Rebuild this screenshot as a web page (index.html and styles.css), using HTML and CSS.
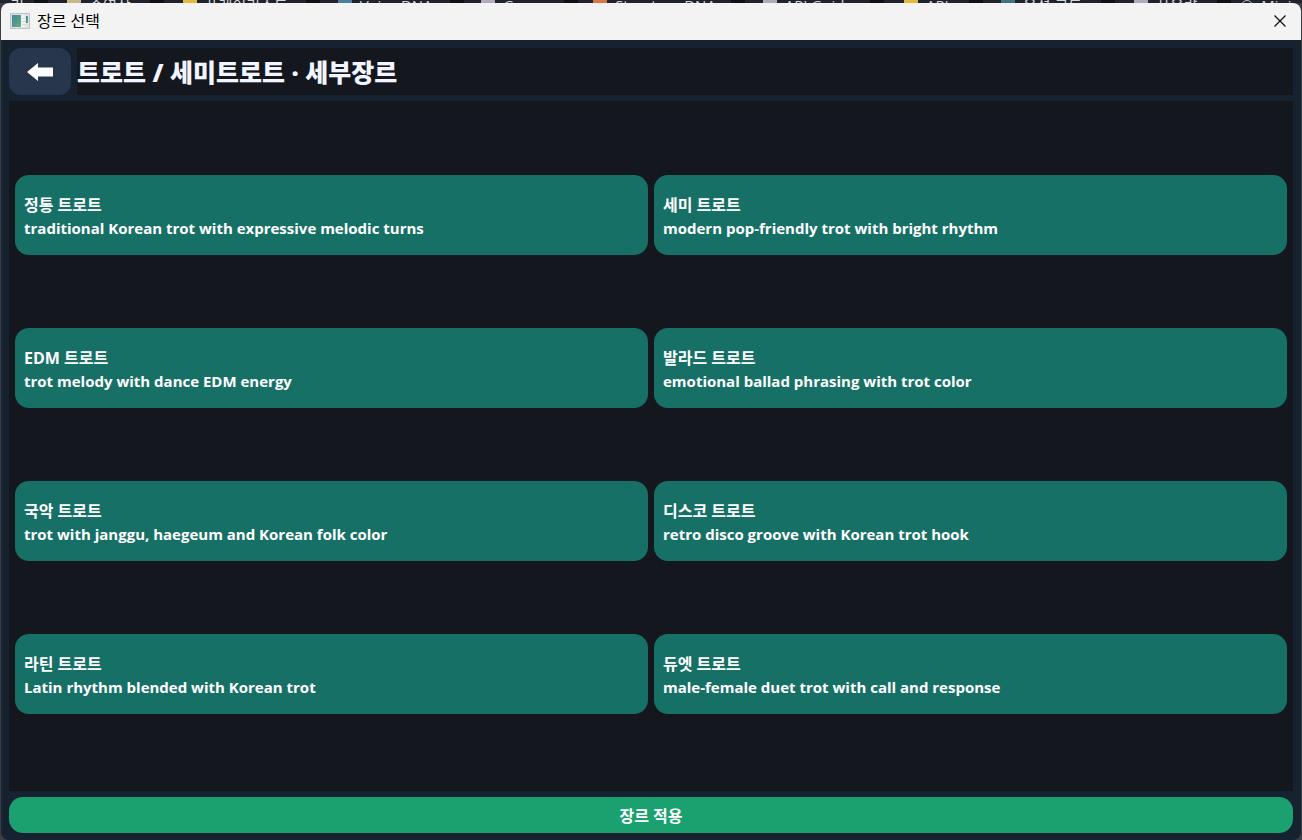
FILE: index.html
```
<!DOCTYPE html>
<html lang="ko">
<head>
<meta charset="UTF-8">
<meta name="viewport" content="width=device-width, initial-scale=1.0">
<title>장르 선택</title>
<link rel="stylesheet" href="styles.css">
</head>
<body>

<!-- Tabs of the main window, peeking out above the dialog -->
<div class="back-tabs">
    <span class="back-tab first">기</span>
    <span class="back-tab"><i class="dot sand"></i>숏영상</span>
    <span class="back-tab wide"><i class="dot yellow"></i>플레이리스트</span>
    <span class="back-tab voice"><i class="dot blue"></i>Voice DNA</span>
    <span class="back-tab genre"><i class="dot lilac"></i>Genre</span>
    <span class="back-tab structure"><i class="dot orange"></i>Structure DNA</span>
    <span class="back-tab guide"><i class="dot lilac"></i>API Guide</span>
    <span class="back-tab api"><i class="dot yellow"></i>API</span>
    <span class="back-tab code"><i class="dot teal"></i>음성 코드</span>
    <span class="back-tab"><i class="dot lilac"></i>사용량</span>
    <span class="back-tab last"><i class="ring"></i>Mini</span>
</div>

<div class="window">
    <div class="titlebar">
        <svg class="app-icon" width="20" height="16" viewBox="0 0 20 16" aria-hidden="true">
            <defs>
                <linearGradient id="pane" x1="0" y1="0" x2="1" y2="1">
                    <stop offset="0" stop-color="#4583a0"/>
                    <stop offset="1" stop-color="#5fb07c"/>
                </linearGradient>
            </defs>
            <rect x="0.5" y="0.5" width="19" height="15" fill="#dfe2e4" stroke="#c0c4c8"/>
            <rect x="2" y="2" width="9" height="12" fill="url(#pane)"/>
            <rect x="11" y="2" width="4" height="12" fill="#f2f3f4"/>
            <path d="M12 5.5h3M12 8.5h3M12 11.5h3" stroke="#d3d6d9"/>
            <rect x="16" y="3" width="2" height="7" fill="url(#pane)"/>
        </svg>
        <span class="window-title">장르 선택</span>
        <button class="close" type="button" aria-label="닫기">
            <svg width="12" height="12" viewBox="0 0 12 12"><path d="M0.5 0.5l11 11M11.5 0.5l-11 11" stroke="#111" stroke-width="1.3" fill="none"/></svg>
        </button>
    </div>

    <main class="content">
        <div class="header">
            <button class="back" type="button" aria-label="뒤로">
                <svg width="26" height="18" viewBox="0 0 26 18"><path d="M0 9L11 0V4.5H26V13.5H11V18Z" fill="#fff"/></svg>
            </button>
            <h1>트로트 / 세미트로트 · 세부장르</h1>
        </div>

        <div class="genres">
            <button class="genre-card" type="button">정통 트로트<span class="desc">traditional Korean trot with expressive melodic turns</span></button>
            <button class="genre-card" type="button">세미 트로트<span class="desc">modern pop-friendly trot with bright rhythm</span></button>
            <button class="genre-card" type="button">EDM 트로트<span class="desc">trot melody with dance EDM energy</span></button>
            <button class="genre-card" type="button">발라드 트로트<span class="desc">emotional ballad phrasing with trot color</span></button>
            <button class="genre-card" type="button">국악 트로트<span class="desc">trot with janggu, haegeum and Korean folk color</span></button>
            <button class="genre-card" type="button">디스코 트로트<span class="desc">retro disco groove with Korean trot hook</span></button>
            <button class="genre-card" type="button">라틴 트로트<span class="desc">Latin rhythm blended with Korean trot</span></button>
            <button class="genre-card" type="button">듀엣 트로트<span class="desc">male-female duet trot with call and response</span></button>
        </div>

        <button class="apply" type="button">장르 적용</button>
    </main>
</div>

</body>
</html>
```
FILE: styles.css
```
* {
    box-sizing: border-box;
}
body {
    margin: 0;
    height: 100vh;
    display: flex;
    flex-direction: column;
    overflow: hidden;
    background-color: #3a3d42;
    font-family: "Open Sans", "Noto Sans CJK KR", sans-serif;
    color: #ffffff;
}
button {
    font-family: inherit;
    color: inherit;
    border: none;
    padding: 0;
    cursor: pointer;
}

/* Strip of tabs behind the dialog */
.back-tabs {
    display: flex;
    gap: 14px;
    height: 3px;
    overflow: hidden;
    background-color: #0e1014;
    font-size: 15px;
    line-height: 10px;
    white-space: nowrap;
}
.back-tab {
    display: flex;
    flex: 102 1 0;
    justify-content: center;
    gap: 8px;
    height: 12px;
    background-color: #20232c;
    color: #d5d8dd;
}
.back-tab.first { flex-grow: 34; }
.back-tab.wide { flex-grow: 142; }
.back-tab.voice { flex-grow: 129; }
.back-tab.genre { flex-grow: 100; }
.back-tab.structure { flex-grow: 153; }
.back-tab.guide { flex-grow: 125; }
.back-tab.api { flex-grow: 84; }
.back-tab.code { flex-grow: 118; }
.back-tab.last { flex-grow: 71; }
.dot {
    width: 14px;
    height: 3px;
}
.ring {
    width: 12px;
    height: 12px;
    border: 1px solid #b8bcc2;
    border-radius: 50%;
}
.sand { background-color: #c9b98a; }
.yellow { background-color: #e6b93c; }
.blue { background-color: #4a7f9e; }
.lilac { background-color: #b3a9bd; }
.orange { background-color: #d97845; }
.teal { background-color: #3d7580; }

.window {
    flex: 1;
    min-height: 0;
    display: flex;
    flex-direction: column;
    margin: 0 1px;
    border-radius: 8px;
    overflow: hidden;
    background-color: #172231;
}
.titlebar {
    display: flex;
    align-items: center;
    height: 37px;
    padding: 0 15px 2px 9px;
    background-color: #f3f3f3;
    color: #000000;
}
.window-title {
    flex: 1;
    margin-left: 7px;
    font-size: 16px;
    line-height: 24px;
}
.app-icon,
.close svg,
.back svg {
    display: block;
}
.close {
    background: none;
}

.content {
    flex: 1;
    min-height: 0;
    display: flex;
    flex-direction: column;
    gap: 6px;
    padding: 8px 8px 7px;
}
.header {
    display: flex;
    gap: 6px;
    height: 47px;
}
.back {
    display: flex;
    align-items: center;
    justify-content: center;
    width: 62px;
    border-radius: 12px;
    background-color: #27364c;
}
h1 {
    flex: 1;
    margin: 0;
    padding-top: 1px;
    background-color: #14171e;
    color: #f1f5ff;
    font-size: 25px;
    font-weight: 900;
    line-height: 46px;
}

.genres {
    flex: 1;
    display: grid;
    grid-template-columns: 1fr 1fr;
    column-gap: 6px;
    align-content: space-evenly;
    padding: 1px 6px 4px;
    background-color: #14171e;
}
.genre-card {
    min-height: 80px;
    padding: 2px 9px 0;
    border-radius: 14px;
    background-color: #177066;
    font-size: 16px;
    font-weight: 700;
    line-height: 24px;
    text-align: left;
}
.genre-card:hover {
    background-color: #1b8075;
}
.desc {
    display: block;
    font-size: 15px;
    line-height: 22px;
}

.apply {
    height: 36px;
    border-radius: 14px;
    background-color: #1aa16f;
    font-size: 16px;
    font-weight: 700;
}
.apply:hover {
    background-color: #1fb37c;
}
```
